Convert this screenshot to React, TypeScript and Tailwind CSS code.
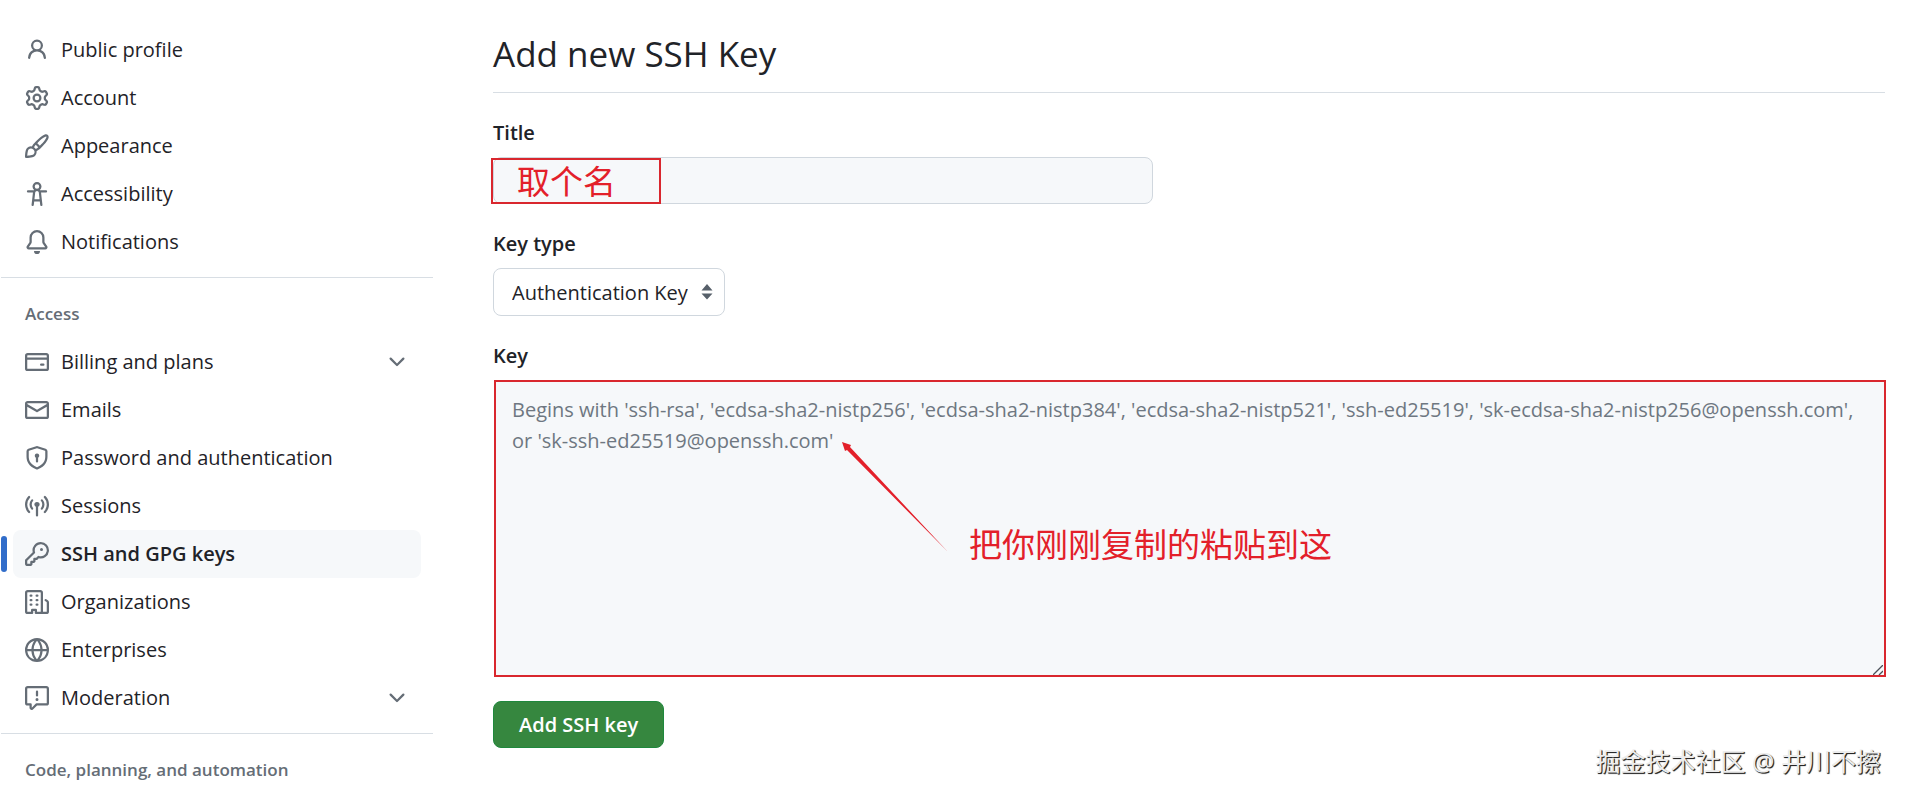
import type { ReactNode } from "react";

type IconName =
  | "person"
  | "gear"
  | "paintbrush"
  | "accessibility"
  | "bell"
  | "creditCard"
  | "mail"
  | "shieldLock"
  | "broadcast"
  | "key"
  | "organization"
  | "globe"
  | "report"
  | "chevronDown";

const ICONS: Record<IconName, string> = {
  person:
    "M10.561 8.073a6.005 6.005 0 0 1 3.432 5.142.75.75 0 1 1-1.498.07 4.5 4.5 0 0 0-8.99 0 .75.75 0 0 1-1.498-.07 6.004 6.004 0 0 1 3.431-5.142 3.999 3.999 0 1 1 5.123 0ZM10.5 5a2.5 2.5 0 1 0-5 0 2.5 2.5 0 0 0 5 0Z",
  gear:
    "M8 0a8.2 8.2 0 0 1 .701.031C9.444.095 9.99.645 10.16 1.29l.288 1.107c.018.066.079.158.212.224.231.114.454.243.668.386.123.082.233.09.299.071l1.103-.303c.644-.176 1.392.021 1.82.63.27.385.506.792.704 1.218.315.675.111 1.422-.364 1.891l-.814.806c-.049.048-.098.147-.088.294.016.257.016.515 0 .772-.01.147.038.246.088.294l.814.806c.475.469.679 1.216.364 1.891a7.977 7.977 0 0 1-.704 1.217c-.428.61-1.176.807-1.82.63l-1.102-.302c-.067-.019-.177-.011-.3.071a5.909 5.909 0 0 1-.668.386c-.133.066-.194.158-.211.224l-.29 1.106c-.168.646-.715 1.196-1.458 1.26a8.006 8.006 0 0 1-1.402 0c-.743-.064-1.289-.614-1.458-1.26l-.289-1.106c-.018-.066-.079-.158-.212-.224a5.738 5.738 0 0 1-.668-.386c-.123-.082-.233-.09-.299-.071l-1.103.303c-.644.176-1.392-.021-1.82-.63a8.12 8.12 0 0 1-.704-1.218c-.315-.675-.111-1.422.363-1.891l.815-.806c.05-.048.098-.147.088-.294a6.214 6.214 0 0 1 0-.772c.01-.147-.038-.246-.088-.294l-.815-.806C.635 6.045.431 5.298.746 4.623a7.92 7.92 0 0 1 .704-1.217c.428-.61 1.176-.807 1.82-.63l1.102.302c.067.019.177.011.3-.071.214-.143.437-.272.668-.386.133-.066.194-.158.211-.224l.29-1.106C6.009.645 6.556.095 7.299.03 7.53.01 7.764 0 8 0Zm-.571 1.525c-.036.003-.108.036-.137.146l-.289 1.105c-.147.561-.549.967-.998 1.189-.173.086-.34.183-.5.29-.417.278-.97.423-1.529.27l-1.103-.303c-.109-.03-.175.016-.195.045-.22.312-.412.644-.573.99-.014.031-.021.11.059.19l.815.806c.411.406.562.957.53 1.456a4.709 4.709 0 0 0 0 .582c.032.499-.119 1.05-.53 1.456l-.815.806c-.081.08-.073.159-.059.19.162.346.353.677.573.989.02.03.085.076.195.046l1.102-.303c.56-.153 1.113-.008 1.53.27.161.107.328.204.501.29.447.222.85.629.997 1.189l.289 1.105c.029.109.101.143.137.146a6.6 6.6 0 0 0 1.142 0c.036-.003.108-.036.137-.146l.289-1.105c.147-.561.549-.967.998-1.189.173-.086.34-.183.5-.29.417-.278.97-.423 1.529-.27l1.103.303c.109.029.175-.016.195-.045.22-.313.411-.644.573-.99.014-.031.021-.11-.059-.19l-.815-.806c-.411-.406-.562-.957-.53-1.456a4.709 4.709 0 0 0 0-.582c-.032-.499.119-1.05.53-1.456l.815-.806c.081-.08.073-.159.059-.19a6.464 6.464 0 0 0-.573-.989c-.02-.03-.085-.076-.195-.046l-1.102.303c-.56.153-1.113.008-1.53-.27a4.44 4.44 0 0 0-.501-.29c-.447-.222-.85-.629-.997-1.189l-.289-1.105c-.029-.11-.101-.143-.137-.146a6.6 6.6 0 0 0-1.142 0ZM11 8a3 3 0 1 1-6 0 3 3 0 0 1 6 0ZM9.5 8a1.5 1.5 0 1 0-3.001.001A1.5 1.5 0 0 0 9.5 8Z",
  paintbrush:
    "M11.134 1.535c.7-.509 1.416-.942 2.076-1.155.649-.21 1.463-.267 2.069.34.603.601.568 1.411.368 2.07-.202.668-.624 1.39-1.125 2.096-1.011 1.424-2.496 2.987-3.775 4.249-1.098 1.084-2.132 1.839-3.04 2.3a3.744 3.744 0 0 1-1.055 3.217c-.431.431-1.065.691-1.657.861-.614.177-1.294.287-1.914.357A21.151 21.151 0 0 1 .797 16H.743l.007-.75H.749L.742 16a.75.75 0 0 1-.743-.742l.743-.008-.742.007v-.054a21.25 21.25 0 0 1 .13-2.284c.067-.647.187-1.287.358-1.914.17-.591.43-1.226.86-1.657a3.746 3.746 0 0 1 3.227-1.054c.466-.893 1.225-1.907 2.314-2.982 1.271-1.255 2.833-2.75 4.245-3.777ZM1.62 13.089c-.051.464-.086.929-.104 1.395.466-.018.932-.053 1.396-.104a10.511 10.511 0 0 0 1.668-.309c.526-.151.856-.325 1.011-.48a2.25 2.25 0 1 0-3.182-3.182c-.155.155-.329.485-.48 1.01a10.515 10.515 0 0 0-.309 1.67Zm10.396-10.34c-1.224.89-2.605 2.189-3.822 3.384l1.718 1.718c1.21-1.205 2.51-2.597 3.387-3.833.47-.662.78-1.227.912-1.662.134-.444.032-.551.009-.575h-.001V1.78c-.014-.014-.113-.113-.548.027-.432.14-.995.462-1.655.942Zm-4.832 7.266-.001.001a9.859 9.859 0 0 0 1.63-1.142L7.155 7.216a9.7 9.7 0 0 0-1.161 1.607c.482.302.889.71 1.19 1.192Z",
  accessibility:
    "M9.923 5.302c.063.063.122.129.178.198H14A.75.75 0 0 1 14 7h-3.3l.578 5.163.362 2.997a.75.75 0 0 1-1.49.18L9.868 13H6.132l-.282 2.34a.75.75 0 0 1-1.49-.18l.362-2.997L5.3 7H2a.75.75 0 0 1 0-1.5h3.9a2.54 2.54 0 0 1 .176-.198 3 3 0 1 1 3.847 0ZM9.2 7.073h-.001a1.206 1.206 0 0 0-2.398 0L6.305 11.5h3.39ZM9.5 3a1.5 1.5 0 1 0-3.001.001A1.5 1.5 0 0 0 9.5 3Z",
  bell:
    "M8 16a2 2 0 0 0 1.985-1.75c.017-.137-.097-.25-.235-.25h-3.5c-.138 0-.252.113-.235.25A2 2 0 0 0 8 16ZM3 5a5 5 0 0 1 10 0v2.947c0 .05.015.098.042.139l1.703 2.555A1.519 1.519 0 0 1 13.482 13H2.518a1.516 1.516 0 0 1-1.263-2.36l1.703-2.554A.255.255 0 0 0 3 7.947Zm5-3.5A3.5 3.5 0 0 0 4.5 5v2.947c0 .346-.102.683-.294.97l-1.703 2.556a.017.017 0 0 0-.003.01l.001.006c0 .002.002.004.004.006l.006.004.007.001h10.964l.007-.001.006-.004.004-.006.001-.007a.017.017 0 0 0-.003-.01l-1.703-2.554a1.745 1.745 0 0 1-.294-.97V5A3.5 3.5 0 0 0 8 1.5Z",
  creditCard:
    "M10.75 9a.75.75 0 0 0 0 1.5h1.5a.75.75 0 0 0 0-1.5h-1.5ZM0 3.75C0 2.784.784 2 1.75 2h12.5c.966 0 1.75.784 1.75 1.75v8.5A1.75 1.75 0 0 1 14.25 14H1.75A1.75 1.75 0 0 1 0 12.25ZM14.5 6.5h-13v5.75c0 .138.112.25.25.25h12.5a.25.25 0 0 0 .25-.25Zm0-2.75a.25.25 0 0 0-.25-.25H1.75a.25.25 0 0 0-.25.25V5h13Z",
  mail:
    "M1.75 2h12.5c.966 0 1.75.784 1.75 1.75v8.5A1.75 1.75 0 0 1 14.25 14H1.75A1.75 1.75 0 0 1 0 12.25v-8.5C0 2.784.784 2 1.75 2ZM1.5 12.251c0 .138.112.25.25.25h12.5a.25.25 0 0 0 .25-.25V5.809L8.38 9.397a.75.75 0 0 1-.76 0L1.5 5.809v6.442Zm13-8.181v-.32a.25.25 0 0 0-.25-.25H1.75a.25.25 0 0 0-.25.25v.32L8 7.88Z",
  shieldLock:
    "m8.533.133 5.25 1.68A1.75 1.75 0 0 1 15 3.48V7c0 1.566-.32 3.182-1.303 4.682-.983 1.498-2.585 2.813-5.032 3.855a1.697 1.697 0 0 1-1.33 0c-2.447-1.042-4.049-2.357-5.032-3.855C1.32 10.182 1 8.566 1 7V3.48a1.755 1.755 0 0 1 1.217-1.667l5.25-1.68a1.748 1.748 0 0 1 1.066 0Zm-.61 1.429.001.001-5.25 1.68a.251.251 0 0 0-.174.237V7c0 1.36.275 2.666 1.057 3.859.784 1.194 2.121 2.342 4.366 3.298a.196.196 0 0 0 .154 0c2.245-.957 3.582-2.103 4.366-3.297C13.225 9.666 13.5 8.358 13.5 7V3.48a.25.25 0 0 0-.174-.238l-5.25-1.68a.25.25 0 0 0-.153 0ZM9.5 6.5c0 .536-.286 1.032-.75 1.3v2.45a.75.75 0 0 1-1.5 0V7.8A1.5 1.5 0 1 1 9.5 6.5Z",
  broadcast:
    "M8.75 8.582v5.668a.75.75 0 0 1-1.5 0V8.582a1.75 1.75 0 1 1 1.5 0Zm3.983-7.125a.75.75 0 0 1 1.06.026A7.976 7.976 0 0 1 16 7c0 2.139-.84 4.083-2.207 5.517a.75.75 0 1 1-1.086-1.034A6.474 6.474 0 0 0 14.5 7a6.474 6.474 0 0 0-1.793-4.483.75.75 0 0 1 .026-1.06Zm-9.466 0c.3.286.312.76.026 1.06A6.474 6.474 0 0 0 1.5 7a6.47 6.47 0 0 0 1.793 4.483.75.75 0 0 1-1.086 1.034A7.973 7.973 0 0 1 0 7c0-2.139.84-4.083 2.207-5.517a.75.75 0 0 1 1.06-.026Zm8.556 2.321A4.988 4.988 0 0 1 13 7a4.988 4.988 0 0 1-1.177 3.222.75.75 0 1 1-1.146-.967A3.487 3.487 0 0 0 11.5 7c0-.86-.309-1.645-.823-2.255a.75.75 0 0 1 1.146-.967Zm-6.492.958A3.48 3.48 0 0 0 4.5 7a3.48 3.48 0 0 0 .823 2.255.75.75 0 0 1-1.146.967A4.981 4.981 0 0 1 3 7a4.982 4.982 0 0 1 1.188-3.236.75.75 0 1 1 1.143.972Z",
  key:
    "M10.5 0a5.499 5.499 0 1 1-1.288 10.848l-.932.932a.749.749 0 0 1-.53.22H7v.75a.749.749 0 0 1-.22.53l-.5.5a.749.749 0 0 1-.53.22H5v.75a.749.749 0 0 1-.22.53l-.5.5a.749.749 0 0 1-.53.22h-2A1.75 1.75 0 0 1 0 14.25v-2c0-.199.079-.389.22-.53l4.932-4.932A5.5 5.5 0 0 1 10.5 0Zm-4 5.5c-.001.431.069.86.205 1.269a.75.75 0 0 1-.181.768L1.5 12.56v1.69c0 .138.112.25.25.25h1.69l.06-.06v-1.19a.75.75 0 0 1 .75-.75h1.19l.06-.06v-1.19a.75.75 0 0 1 .75-.75h1.19l1.023-1.025a.75.75 0 0 1 .768-.18A4 4 0 1 0 6.5 5.5ZM11 6a1 1 0 1 1 0-2 1 1 0 0 1 0 2Z",
  organization:
    "M1.75 16A1.75 1.75 0 0 1 0 14.25V1.75C0 .784.784 0 1.75 0h8.5C11.216 0 12 .784 12 1.75v12.5c0 .085-.006.168-.018.25h2.268a.25.25 0 0 0 .25-.25V8.285a.25.25 0 0 0-.111-.208l-1.055-.703a.749.749 0 1 1 .832-1.248l1.055.703c.487.325.779.871.779 1.456v5.965A1.75 1.75 0 0 1 14.25 16h-3.5a.766.766 0 0 1-.197-.026c-.099.017-.2.026-.303.026h-3a.75.75 0 0 1-.75-.75V14h-1v1.25a.75.75 0 0 1-.75.75Zm-.25-1.75c0 .138.112.25.25.25H4v-1.25a.75.75 0 0 1 .75-.75h2.5a.75.75 0 0 1 .75.75v1.25h2.25a.25.25 0 0 0 .25-.25V1.75a.25.25 0 0 0-.25-.25h-8.5a.25.25 0 0 0-.25.25ZM3.75 6h.5a.75.75 0 0 1 0 1.5h-.5a.75.75 0 0 1 0-1.5ZM3 3.75A.75.75 0 0 1 3.75 3h.5a.75.75 0 0 1 0 1.5h-.5A.75.75 0 0 1 3 3.75Zm4 3A.75.75 0 0 1 7.75 6h.5a.75.75 0 0 1 0 1.5h-.5A.75.75 0 0 1 7 6.75ZM7.75 3h.5a.75.75 0 0 1 0 1.5h-.5a.75.75 0 0 1 0-1.5ZM3 9.75A.75.75 0 0 1 3.75 9h.5a.75.75 0 0 1 0 1.5h-.5A.75.75 0 0 1 3 9.75ZM7.75 9h.5a.75.75 0 0 1 0 1.5h-.5a.75.75 0 0 1 0-1.5Z",
  globe:
    "M8 0a8 8 0 1 1 0 16A8 8 0 0 1 8 0ZM5.78 8.75a9.64 9.64 0 0 0 1.363 4.177c.255.426.542.832.857 1.215.245-.296.551-.705.857-1.215A9.64 9.64 0 0 0 10.22 8.75Zm4.44-1.5a9.64 9.64 0 0 0-1.363-4.177c-.307-.51-.612-.919-.857-1.215a9.927 9.927 0 0 0-.857 1.215A9.64 9.64 0 0 0 5.78 7.25Zm-5.944 1.5H1.543a6.507 6.507 0 0 0 4.666 5.5c-.123-.181-.24-.365-.352-.552-.715-1.192-1.437-2.874-1.581-4.948Zm-2.733-1.5h2.733c.144-2.074.866-3.756 1.58-4.948.12-.197.237-.381.353-.552a6.507 6.507 0 0 0-4.666 5.5Zm10.181 1.5c-.144 2.074-.866 3.756-1.58 4.948-.12.197-.237.381-.353.552a6.507 6.507 0 0 0 4.666-5.5Zm2.733-1.5a6.507 6.507 0 0 0-4.666-5.5c.123.181.24.365.353.552.714 1.192 1.436 2.874 1.58 4.948Z",
  report:
    "M0 1.75C0 .784.784 0 1.75 0h12.5C15.216 0 16 .784 16 1.75v9.5A1.75 1.75 0 0 1 14.25 13H8.06l-2.573 2.573A1.458 1.458 0 0 1 3 14.543V13H1.75A1.75 1.75 0 0 1 0 11.25Zm1.75-.25a.25.25 0 0 0-.25.25v9.5c0 .138.112.25.25.25h2a.75.75 0 0 1 .75.75v2.19l2.72-2.72a.749.749 0 0 1 .53-.22h6.5a.25.25 0 0 0 .25-.25v-9.5a.25.25 0 0 0-.25-.25Zm7 2.25v2.5a.75.75 0 0 1-1.5 0v-2.5a.75.75 0 0 1 1.5 0ZM9 9a1 1 0 1 1-2 0 1 1 0 0 1 2 0Z",
  chevronDown:
    "M12.78 5.22a.749.749 0 0 1 0 1.06l-4.25 4.25a.749.749 0 0 1-1.06 0L3.22 6.28a.749.749 0 1 1 1.06-1.06L8 8.939l3.72-3.719a.749.749 0 0 1 1.06 0Z",
};

type NavItem = { label: string; icon: IconName; active?: boolean; expandable?: boolean };

const accountItems: NavItem[] = [
  { label: "Public profile", icon: "person" },
  { label: "Account", icon: "gear" },
  { label: "Appearance", icon: "paintbrush" },
  { label: "Accessibility", icon: "accessibility" },
  { label: "Notifications", icon: "bell" },
];

const accessItems: NavItem[] = [
  { label: "Billing and plans", icon: "creditCard", expandable: true },
  { label: "Emails", icon: "mail" },
  { label: "Password and authentication", icon: "shieldLock" },
  { label: "Sessions", icon: "broadcast" },
  { label: "SSH and GPG keys", icon: "key", active: true },
  { label: "Organizations", icon: "organization" },
  { label: "Enterprises", icon: "globe" },
  { label: "Moderation", icon: "report", expandable: true },
];

function Icon({ name }: { name: IconName }) {
  return (
    <svg viewBox="0 0 16 16" fill="currentColor" aria-hidden="true" className="size-6 shrink-0 text-[#656d76]">
      <path d={ICONS[name]} />
    </svg>
  );
}

function NavRow({ item }: { item: NavItem }) {
  const row = `flex h-12 w-full items-center gap-3 rounded-lg px-3 text-left ${
    item.active ? "bg-[#f6f8fa] font-semibold" : "hover:bg-[#f6f8fa]"
  }`;

  return (
    <li className="relative px-3">
      {item.active && <span className="absolute left-0 top-1.5 h-9 w-1.5 rounded-md bg-[#316dca]" />}
      {item.expandable ? (
        <button type="button" aria-expanded="false" className={row}>
          <Icon name={item.icon} />
          <span className="grow">{item.label}</span>
          <Icon name="chevronDown" />
        </button>
      ) : (
        <a href="#" aria-current={item.active ? "page" : undefined} className={row}>
          <Icon name={item.icon} />
          <span>{item.label}</span>
        </a>
      )}
    </li>
  );
}

function NavGroup({ title, children }: { title: string; children?: ReactNode }) {
  return (
    <section className="mt-[11px] border-t border-[#d8dee4]">
      <h2 className="px-6 pt-6 pb-3 text-[17px] leading-6 font-semibold text-[#656d76]">{title}</h2>
      {children}
    </section>
  );
}

export default function App() {
  return (
    <div className="relative flex min-h-screen gap-15 overflow-hidden bg-white pr-5 pl-px font-['Open_Sans','Noto_Sans_CJK_SC',sans-serif] text-xl text-[#1f2328]">
      <nav aria-label="Settings" className="w-108 shrink-0 pt-[26px]">
        <ul>
          {accountItems.map((item) => (
            <NavRow key={item.label} item={item} />
          ))}
        </ul>
        <NavGroup title="Access">
          <ul>
            {accessItems.map((item) => (
              <NavRow key={item.label} item={item} />
            ))}
          </ul>
        </NavGroup>
        <NavGroup title="Code, planning, and automation" />
      </nav>

      <main className="min-w-0 grow pt-8">
        <h1 className="border-b border-[#d8dee4] pb-4 text-[35px] leading-11">Add new SSH Key</h1>

        <form className="mt-6 flex flex-col items-start" onSubmit={(e) => e.preventDefault()}>
          <label htmlFor="key-title" className="leading-8 font-semibold">
            Title
          </label>
          <div className="relative mt-2 w-full max-w-165">
            <input
              id="key-title"
              type="text"
              className="block h-[47px] w-full rounded-lg border border-[#d0d7de] bg-[#f6f8fa] px-[18px]"
            />
            <div className="pointer-events-none absolute top-px bottom-0 -left-0.5 flex w-[170px] items-center border-2 border-[#d9272e] pl-6 text-[33px] leading-none text-[#e3202a]">
              取个名
            </div>
          </div>

          <label htmlFor="key-type" className="mt-6 leading-8 font-semibold">
            Key type
          </label>
          <div className="relative mt-2">
            <select
              id="key-type"
              className="block h-12 w-58 appearance-none rounded-lg border border-[#d0d7de] bg-white pt-0.5 pr-9 pl-[18px]"
            >
              <option>Authentication Key</option>
              <option>Signing Key</option>
            </select>
            <svg
              viewBox="0 0 12 16"
              fill="#57606a"
              aria-hidden="true"
              className="pointer-events-none absolute top-4 right-3 h-4 w-3"
            >
              <path d="M6 0 11.5 6.500H.5ZM.5 9.500h11L6 15.500Z" />
            </svg>
          </div>

          <label htmlFor="key-body" className="mt-6 leading-8 font-semibold">
            Key
          </label>
          <div className="relative mt-2 -mr-px ml-px self-stretch">
            <textarea
              id="key-body"
              placeholder="Begins with 'ssh-rsa', 'ecdsa-sha2-nistp256', 'ecdsa-sha2-nistp384', 'ecdsa-sha2-nistp521', 'ssh-ed25519', 'sk-ecdsa-sha2-nistp256@openssh.com', or 'sk-ssh-ed25519@openssh.com'"
              className="block h-[297px] w-full resize-y border-2 border-[#d9272e] bg-[#f6f8fa] px-4 py-3 leading-[31px] placeholder:text-[#6e7781] [&::-webkit-resizer]:hidden"
            />
            <svg
              viewBox="0 0 10 10"
              stroke="#4b5058"
              strokeWidth="1.3"
              aria-hidden="true"
              className="pointer-events-none absolute right-[3px] bottom-0.5 size-2.5"
            >
              <path d="M0 10 10 0M6 10l4-4" />
            </svg>
            <svg
              viewBox="0 0 106 110"
              fill="#e3202a"
              aria-hidden="true"
              className="pointer-events-none absolute top-[62px] left-[348px] h-[110px] w-[106px]"
            >
              <path d="M0 0 9 3 8 5 106 110 5 8 3 9Z" />
            </svg>
            <p className="pointer-events-none absolute top-36 left-[475px] text-[33px] leading-[42px] text-[#e3202a]">
              把你刚刚复制的粘贴到这
            </p>
          </div>

          <button
            type="submit"
            className="mt-6 h-[47px] rounded-lg border border-[#1f883d] bg-[#36873f] px-[25px] font-semibold text-white"
          >
            Add SSH key
          </button>
        </form>
      </main>

      <p className="pointer-events-none absolute right-6 bottom-5 text-[25px] leading-8 text-[#ededed] [text-shadow:1px_1px_1px_#222,1px_1px_0_#555]">
        掘金技术社区 @ 井川不擦
      </p>
    </div>
  );
}
